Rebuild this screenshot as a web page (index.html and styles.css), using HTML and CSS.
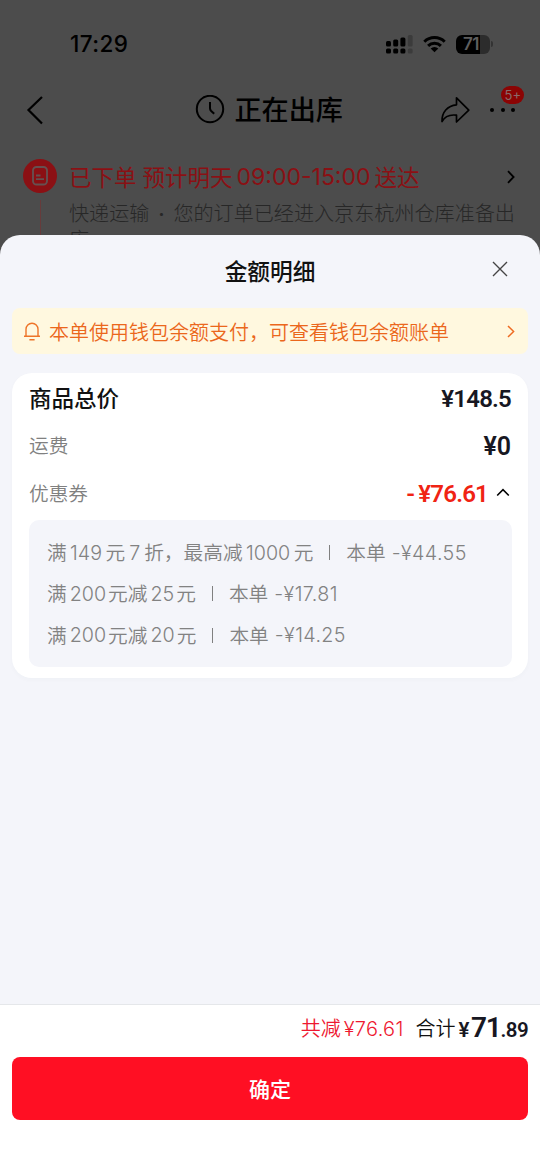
FILE: index.html
```html
<!DOCTYPE html>
<html lang="zh-CN">
<head>
<meta charset="utf-8">
<meta name="viewport" content="width=device-width, initial-scale=1">
<title>金额明细</title>
<link rel="stylesheet" href="styles.css">
</head>
<body>
<div class="app">
  <div class="backdrop">
    <div class="status">
      <span class="clock">17:29</span>
      <div class="status-icons">
        <svg class="signal" width="27" height="19" viewBox="0 0 27 19">
          <g fill="#000"><rect x="0" y="6" width="5" height="5.5" rx="1.5"/><rect x="7.2" y="4.5" width="5" height="7" rx="1.5"/><rect x="14.4" y="2.5" width="5" height="9" rx="1.5"/><rect x="0" y="13.5" width="5" height="5" rx="1.5"/><rect x="7.2" y="13.5" width="5" height="5" rx="1.5"/><rect x="14.4" y="13.5" width="5" height="5" rx="1.5"/></g>
          <g fill="#3b3b3b"><rect x="21.8" y="0" width="4.8" height="11.5" rx="1.5"/><rect x="21.8" y="13.5" width="4.8" height="5" rx="1.5"/></g>
        </svg>
        <svg class="wifi" width="23" height="18" viewBox="0 0 23 18">
          <g fill="none" stroke="#000" stroke-width="3"><path d="M1.3 6.7a14.6 14.6 0 0 1 20.4 0"/><path d="M5.1 10.9a9.2 9.2 0 0 1 12.8 0"/></g>
          <path d="M7.7 13.5a5.5 5.5 0 0 1 7.6 0L11.5 17.3z" fill="#000"/>
        </svg>
        <div class="battery"><span class="battery-level">71</span></div>
        <i class="battery-tip"></i>
      </div>
    </div>
    <div class="nav">
      <svg class="back" width="18" height="30" viewBox="0 0 18 30"><path d="M16 2L2.5 15L16 28.5" fill="none" stroke="#000" stroke-width="2.2"/></svg>
      <div class="nav-title">
        <svg width="30" height="30" viewBox="0 0 30 30"><g fill="none" stroke="#000" stroke-width="2"><circle cx="15" cy="14" r="13.2"/><path d="M15 7V13.2Q15 14.8 16.2 16L19.2 18.8"/></g></svg>
        <span>正在出库</span>
      </div>
      <svg class="share" width="31" height="28" viewBox="0 0 31 28"><path d="M16.5 1.8L28.8 14.2L16.5 26V19.2C10 18.4 5 20 2 25.5C1.6 16.5 7.5 9.5 16.5 8.8Z" fill="none" stroke="#000" stroke-width="1.7" stroke-linejoin="round"/></svg>
      <div class="more"><i></i><i></i><i></i><span class="badge">5+</span></div>
    </div>
    <div class="order">
      <div class="track">
        <div class="order-icon">
          <svg width="16" height="20" viewBox="0 0 16 20"><rect x="1" y="1" width="14" height="17.5" rx="3.5" fill="none" stroke="#665050" stroke-width="1.9"/><path d="M4 9.5H8.5M4 13.2H12" stroke="#665050" stroke-width="1.8"/></svg>
        </div>
        <i class="track-line"></i>
      </div>
      <div class="order-body">
        <div class="order-head">
          <span class="order-status">已下单</span><span class="order-eta">预计明天</span><span class="order-time">09:00-15:00</span><span>送达</span>
          <svg class="chev" width="8" height="14" viewBox="0 0 8 14"><path d="M1 1.2L6.6 7L1 12.8" fill="none" stroke="#000" stroke-width="1.8"/></svg>
        </div>
        <div class="order-desc"><span>快递运输</span><b>·</b><span>您的订单已经进入京东杭州仓库准备出</span></div>
        <div class="order-desc">库</div>
      </div>
    </div>
  </div>

  <div class="sheet">
    <div class="sheet-head">
      <h1>金额明细</h1>
      <svg class="close" width="16" height="16" viewBox="0 0 16 16"><path d="M1 1L15 15M15 1L1 15" stroke="#444" stroke-width="1.35"/></svg>
    </div>
    <div class="notice">
      <svg class="bell" width="18" height="19" viewBox="0 0 18 19"><g fill="none" stroke="#ee7428" stroke-width="1.4"><path d="M3 14.2V7.2a6 6 0 0 1 12 0V14.2"/><path d="M1 14.3H17M6.4 17.8H11.6"/></g></svg>
      <span>本单使用钱包余额支付，可查看钱包余额账单</span>
      <svg class="chev" width="8" height="13" viewBox="0 0 8 13"><path d="M1 1L6.6 6.5L1 12" fill="none" stroke="#ee6b22" stroke-width="1.5"/></svg>
    </div>
    <div class="card">
      <div class="row row-total"><strong>商品总价</strong><span class="price">¥148.5</span></div>
      <div class="row row-fee"><span>运费</span><span class="price price-fee">¥0</span></div>
      <div class="row row-coupon"><span>优惠券</span><span class="price price-off"><i>-</i>¥76.61</span>
        <svg width="14" height="9" viewBox="0 0 14 9"><path d="M1.2 7.5L7 1.6L12.8 7.5" fill="none" stroke="#000" stroke-width="1.6"/></svg>
      </div>
      <div class="coupons">
        <div class="coupon coupon-wide"><span>满</span><b>149</b><span>元</span><b class="single">7</b><span>折，最高减</span><b>1000</b><span>元</span><i class="bar"></i><span>本单</span><b class="amount">-¥44.55</b></div>
        <div class="coupon"><span>满</span><b>200</b><span>元减</span><b>25</b><span>元</span><i class="bar"></i><span>本单</span><b class="amount">-¥17.81</b></div>
        <div class="coupon"><span>满</span><b>200</b><span>元减</span><b>20</b><span>元</span><i class="bar"></i><span>本单</span><b class="amount">-¥14.25</b></div>
      </div>
    </div>
    <div class="footer">
      <div class="totals">
        <span class="saved">共减<b>¥76.61</b></span>
        <span class="sum">合计</span>
        <span class="sum-price"><small class="yen">¥</small>71<small>.89</small></span>
      </div>
      <button class="confirm" type="button">确定</button>
    </div>
  </div>
</div>
</body>
</html>
```

FILE: styles.css
```css
* { box-sizing: border-box; }
body { margin: 0; font-family: Inter, "Noto Sans CJK SC", sans-serif; background: #4c4c4c; }
svg { display: block; flex: none; }
i, b { font-style: normal; font-weight: inherit; }
.app { width: 540px; height: 1174px; display: flex; flex-direction: column; overflow: hidden; background: #4c4c4c; white-space: nowrap; }

.backdrop { height: 235px; flex: none; overflow: hidden; color: #000; }
.status { height: 64px; padding: 24px 47px 0 70px; display: flex; justify-content: space-between; }
.clock { height: 40px; line-height: 40px; font-size: 22.5px; font-weight: 500; letter-spacing: 0.4px; }
.status-icons { display: flex; align-items: center; height: 40px; }
.signal { margin-right: 10px; }
.wifi { margin-right: 10px; }
.battery { width: 34px; height: 19px; border-radius: 6px; overflow: hidden; background: linear-gradient(90deg, #000 72%, #2c2c2c 72%); color: #5e5e5e; }
.battery-level { display: block; padding-left: 7px; line-height: 19px; font-size: 17px; font-weight: 600; letter-spacing: -0.6px; }
.battery-tip { width: 2px; height: 6px; margin-left: 1px; border-radius: 0 2px 2px 0; background: #333; }

.nav { height: 92px; padding: 0 24px 0 26px; display: flex; align-items: center; }
.nav-title { display: flex; align-items: center; gap: 9.5px; margin-left: 151px; font-size: 27.1px; font-weight: 500; line-height: 40px; }
.nav-title span { padding-top: 1px; }
.share { margin-left: 97px; }
.more { position: relative; display: flex; gap: 6.5px; margin-left: 19.5px; }
.more i { width: 4px; height: 4px; border-radius: 50%; background: #000; }
.badge { position: absolute; left: 11px; top: -22px; width: 23px; height: 18px; border-radius: 9px; background: #8b0404; color: #8a6a6a; font-size: 13px; line-height: 18px; text-align: center; }

.order { display: flex; padding: 3px 24px 0 23px; }
.track { width: 46px; flex: none; }
.order-icon { width: 34px; height: 34px; border-radius: 50%; background: #8b1014; display: flex; align-items: center; justify-content: center; }
.track-line { display: block; width: 1px; height: 44px; margin: 7px 0 0 17px; background: #673b3b; }
.order-head { display: flex; align-items: center; height: 36px; color: #8a1014; font-size: 22.5px; font-weight: 400; }
.order-head span { margin-top: -2px; }
.order-head .order-eta { margin-left: 6px; }
.order-head .order-time { margin: 0 4px; font-size: 23px; }
.order-head .chev { margin-left: 87px; margin-top: -1px; }
.order-desc { display: flex; height: 26px; line-height: 38px; font-size: 20.1px; font-weight: 300; color: #272727; }
.order-desc b { width: 24px; text-align: center; font-weight: 600; }

.sheet { flex: 1; display: flex; flex-direction: column; border-radius: 20px 20px 0 0; background: #f4f5fa; }
.sheet-head { height: 73px; padding-right: 32px; display: grid; grid-template-columns: 1fr auto 1fr; align-items: center; }
.sheet-head h1 { grid-column: 2; margin: 0 0 2px; padding-left: 32px; font-size: 22.7px; font-weight: 500; color: #111; }
.close { justify-self: end; margin-bottom: 5px; }
.notice { height: 46px; margin: 0 12px; padding: 0 13px 0 11px; border-radius: 8px; background: #fff8df; display: flex; align-items: center; color: #eb671c; font-size: 20px; }
.notice span { margin-left: 8px; flex: 1; font-weight: 350; }

.card { height: 305px; margin: 19px 12px 0; padding: 0 16px 0 17px; border-radius: 20px; background: #fff; box-shadow: 0 2px 5px rgba(60, 70, 100, .025); }
.row { display: flex; align-items: center; justify-content: space-between; color: #808080; font-size: 19.7px; font-weight: 350; padding-right: 1px; }
.row > span:first-child { margin-top: -3px; }
.row-total { height: 51px; }
.row-total strong { margin-top: -3px; color: #111; font-size: 22.5px; font-weight: 500; }
.row-fee { height: 44px; }
.row-coupon { height: 52px; }
.price { font-family: Roboto, sans-serif; font-size: 24px; font-weight: 600; color: #171722; letter-spacing: -0.8px; }
.price-fee { font-size: 25px; letter-spacing: 0; }
.price-off { color: #f02313; margin-left: auto; }
.price-off i { margin-right: 4px; }
.row-coupon svg { margin: -3px 1px 0 8px; }
.coupons { height: 147px; padding: 12px 18px; border-radius: 10px; background: #f4f5fa; }
.coupon { height: 41.3px; display: flex; align-items: center; font-size: 19.7px; font-weight: 350; color: #828282; }
.coupon span { margin-top: -2px; }
.coupon b { margin: 0 2px 0 3px; font-size: 19.7px; }
.coupon-wide b { margin: 0 3.4px; }
.coupon-wide .single { margin: 0 4px; }
.coupon .bar { width: 1px; height: 15px; margin: 0 16px 0 16px; background: #808080; }
.coupon .amount { margin-left: 6px; letter-spacing: 0.4px; }

.footer { margin-top: auto; height: 170px; padding: 0 12px; border-top: 1px solid #e5e7ea; background: #fff; }
.totals { height: 52px; padding-bottom: 7px; display: flex; align-items: center; justify-content: flex-end; font-size: 20px; font-weight: 350; }
.saved { color: #ee1830; }
.saved b { margin-left: 3px; letter-spacing: 0.3px; }
.sum { margin: 0 3px 0 12px; color: #111; }
.sum-price { font-family: Roboto, sans-serif; font-size: 28px; font-weight: 600; color: #171722; letter-spacing: -1.2px; }
.sum-price small { font-size: 20.5px; letter-spacing: -0.6px; }
.sum-price .yen { margin-right: 2px; }
.confirm { display: block; width: 100%; height: 63px; padding: 0 0 2px; border: 0; border-radius: 8px; background: #ff0f23; color: #fff; font: 500 21px Inter, "Noto Sans CJK SC", sans-serif; }
```
